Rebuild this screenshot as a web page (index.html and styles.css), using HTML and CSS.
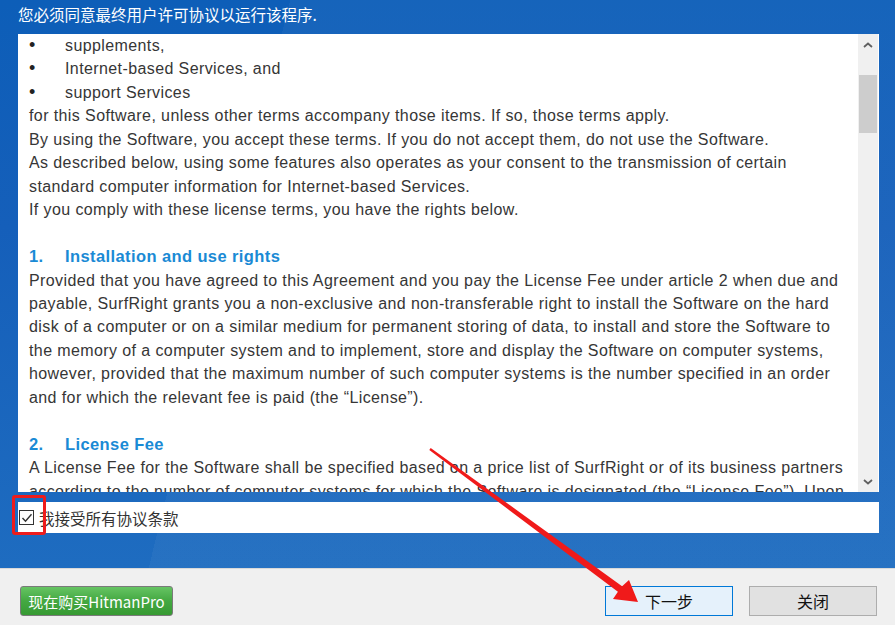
FILE: index.html
```html
<!DOCTYPE html>
<html lang="zh-CN">
<head>
  <meta charset="UTF-8" />
  <meta name="viewport" content="width=device-width, initial-scale=1.0" />
  <title>HitmanPro 许可协议</title>
  <link rel="stylesheet" href="styles.css">
</head>
<body>
  <div class="main">
    <div class="title">您必须同意最终用户许可协议以运行该程序.</div>

    <div class="license">
      <div class="license-text">
        <ul class="bullets">
          <li>supplements,</li>
          <li>Internet-based Services, and</li>
          <li>support Services</li>
        </ul>
        <p>for this Software, unless other terms accompany those items. If so, those terms apply.</p>
        <p>By using the Software, you accept these terms. If you do not accept them, do not use the Software.</p>
        <p>As described below, using some features also operates as your consent to the transmission of certain standard computer information for Internet-based Services.</p>
        <p>If you comply with these license terms, you have the rights below.</p>

        <h2><span class="num">1.</span>Installation and use rights</h2>
        <p>Provided that you have agreed to this Agreement and you pay the License Fee under article 2 when due and payable, SurfRight grants you a non-exclusive and non-transferable right to install the Software on the hard disk of a computer or on a similar medium for permanent storing of data, to install and store the Software to the memory of a computer system and to implement, store and display the Software on computer systems, however, provided that the maximum number of such computer systems is the number specified in an order and for which the relevant fee is paid (the “License”).</p>

        <h2><span class="num">2.</span>License Fee</h2>
        <p>A License Fee for the Software shall be specified based on a price list of SurfRight or of its business partners according to the number of computer systems for which the Software is designated (the “License Fee”). Upon payment of the License Fee you will receive a license key.</p>
      </div>
      <div class="scrollbar">
        <div class="scroll-btn">
          <svg width="10" height="6" viewBox="0 0 10 6"><path d="M1 5 L5 1.5 L9 5" fill="none" stroke="#606060" stroke-width="1.8"/></svg>
        </div>
        <div class="track"><div class="thumb"></div></div>
        <div class="scroll-btn">
          <svg width="10" height="6" viewBox="0 0 10 6"><path d="M1 1 L5 4.5 L9 1" fill="none" stroke="#606060" stroke-width="1.8"/></svg>
        </div>
      </div>
    </div>

    <label class="agree">
      <span class="check">
        <svg width="12" height="12" viewBox="0 0 12 12"><path d="M1.5 6 L4.5 9.2 L10.5 2.2" fill="none" stroke="#333" stroke-width="1.4"/></svg>
      </span>
      <span>我接受所有协议条款</span>
    </label>
  </div>

  <div class="footer">
    <a href="#" class="btn btn-buy">现在购买HitmanPro</a>
    <a href="#" class="btn btn-next">下一步</a>
    <a href="#" class="btn btn-close">关闭</a>
  </div>

  <!-- annotation marks -->
  <div class="mark-box"></div>
  <svg class="mark-arrow" width="895" height="625" viewBox="0 0 895 625">
    <polygon fill="#f01a1a" points="430.7,448 622.1,586.2 629,580 638,602 613,599 617.9,591.8 429.3,450"/>
  </svg>
</body>
</html>
```

FILE: styles.css
```css
* { box-sizing: border-box; margin: 0; padding: 0; }
body { width: 895px; height: 625px; overflow: hidden; position: relative; font-family: "Noto Sans CJK SC", "Liberation Sans", sans-serif; background: #f0f0f0; }

.main { height: 568px; padding: 0 16px 0 18px; background: linear-gradient(104deg, rgba(255,255,255,0) 28%, rgba(255,255,255,0.04) 28%), linear-gradient(180deg, #0d5eb8 0%, #155fba 40%, #1e6cc0 100%); }
.title { height: 34px; line-height: 29px; font-size: 15.5px; color: #fff; }

.license { height: 458px; display: flex; background: #fff; }
.license-text { flex: 1; overflow: hidden; padding: 0 12px 0 11px; font-family: "Liberation Sans", Arial, sans-serif; font-size: 16px; letter-spacing: 0.4px; line-height: 23.45px; color: #363636; }
.license-text p { margin: 0; }
.bullets { list-style: none; }
.bullets li { position: relative; padding-left: 36px; }
.bullets li::before { content: "\2022"; position: absolute; left: 0; font-size: 18px; color: #222; }
.license-text h2 { margin-top: 23.45px; font-size: 16.5px; font-weight: bold; color: #1a8ad5; line-height: 23.45px; }
.license-text h2 .num { display: inline-block; width: 36px; }

.scrollbar { width: 20px; margin-right: 1px; background: #f0f0f0; display: flex; flex-direction: column; }
.scroll-btn { height: 21px; display: flex; align-items: center; justify-content: center; }
.track { flex: 1; padding: 20px 1px 0; }
.thumb { height: 58px; background: #cdcdcd; }

.agree { display: flex; align-items: center; gap: 5px; margin-top: 10px; height: 31px; padding-left: 1px; background: #fff; font-size: 15.5px; color: #333; }
.check { width: 15px; height: 15px; border: 1px solid #333; display: flex; align-items: center; justify-content: center; background: #fff; }

.footer { height: 57px; border-top: 1px solid #d9d9d9; display: flex; align-items: flex-start; gap: 16px; padding: 17px 18px 0 20px; }
.btn { height: 30px; display: flex; align-items: center; justify-content: center; text-decoration: none; font-size: 16px; color: #111; border-radius: 2px; }
.btn-buy { width: 153px; margin-right: auto; font-size: 15px; color: #fff; border: 1px solid #7a7a7a; border-radius: 3px; background: linear-gradient(180deg, #66c463 0%, #44a842 50%, #379a33 100%); }
.btn-next { width: 128px; background: #e5f1fb; border: 1px solid #0078d7; border-radius: 0; }
.btn-close { width: 128px; background: #e1e1e1; border: 1px solid #adadad; border-radius: 0; }

.mark-box { position: absolute; left: 12px; top: 495px; width: 34px; height: 40px; border: 3px solid #ee1c1c; border-radius: 3px; }
.mark-arrow { position: absolute; left: 0; top: 0; pointer-events: none; }
```
